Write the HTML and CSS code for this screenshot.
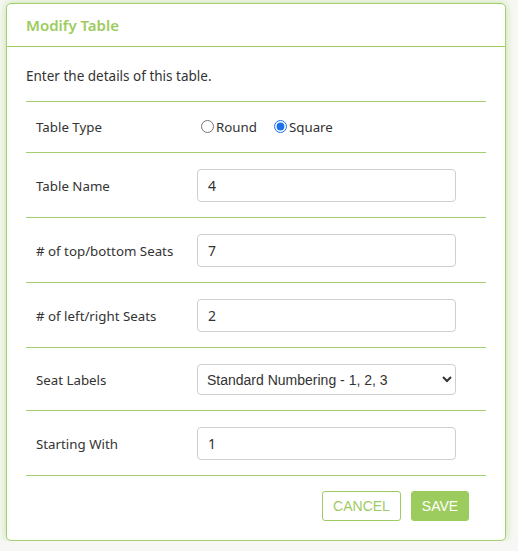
FILE: index.html
```html
<!DOCTYPE html>
<html lang="en">

<head>
  <meta charset="UTF-8" />
  <meta name="viewport" content="width=device-width, initial-scale=1.0" />
  <title>Modify Table</title>
  <link rel="stylesheet" href="styles.css">
</head>

<body>
  <div class="modal">
    <div class="modal-header">
      <h2>Modify Table</h2>
    </div>
    <div class="modal-body">
      <p class="intro">Enter the details of this table.</p>
      <div class="form-row">
        <label>Table Type</label>
        <div class="radios">
          <label class="radio"><input type="radio" name="shape" /> Round</label>
          <label class="radio"><input type="radio" name="shape" checked /> Square</label>
        </div>
      </div>
      <div class="form-row">
        <label>Table Name</label>
        <input type="text" value="4" />
      </div>
      <div class="form-row">
        <label># of top/bottom Seats</label>
        <input type="text" value="7" />
      </div>
      <div class="form-row">
        <label># of left/right Seats</label>
        <input type="text" value="2" />
      </div>
      <div class="form-row">
        <label>Seat Labels</label>
        <select>
          <option>Standard Numbering - 1, 2, 3</option>
          <option>Letters - A, B, C</option>
        </select>
      </div>
      <div class="form-row">
        <label>Starting With</label>
        <input type="text" value="1" />
      </div>
    </div>
    <div class="modal-footer">
      <button class="btn btn-outline">CANCEL</button>
      <button class="btn btn-primary">SAVE</button>
    </div>
  </div>
</body>

</html>
```

FILE: styles.css
```css
* {
  box-sizing: border-box;
}

body {
  margin: 0;
  background: #f7f8f5;
  font-family: "Noto Sans", Lato, sans-serif;
  color: #333;
}

.modal {
  width: 500px;
  height: 538px;
  margin: 3px 0 0 6px;
  background: #fff;
  border: 1px solid #a6d070;
  border-radius: 5px;
  box-shadow: 0 0 8px rgba(150, 205, 90, 0.55);
  display: flex;
  flex-direction: column;
}

.modal-header {
  height: 43px;
  padding: 0 19px;
  border-bottom: 1px solid #9fcb63;
  display: flex;
  align-items: center;
}

.modal-header h2 {
  margin: 0;
  font-size: 15px;
  font-weight: 600;
  color: #9dcc5e;
}

.modal-body {
  padding: 0 19px;
}

.intro {
  margin: 0;
  height: 55px;
  padding-top: 20px;
  font-size: 13.5px;
  border-bottom: 1px solid #a6cd70;
}

.form-row {
  display: grid;
  grid-template-columns: 171px 259px;
  align-items: center;
  padding: 16px 0 15px;
  border-bottom: 1px solid #a6cd70;
  font-size: 13.3px;
}

.form-row > label {
  padding-left: 10px;
}

.form-row:first-of-type {
  padding: 14px 0 15px;
}

.radios {
  display: flex;
  align-items: center;
  gap: 17px;
  padding-left: 4px;
  height: 21px;
}

.radio {
  display: flex;
  align-items: center;
}

.radio input {
  margin: 0 2px 0 0;
  width: 13px;
  height: 13px;
  accent-color: #1a73e8;
}

.form-row input[type="text"],
.form-row select {
  width: 259px;
  height: 33px;
  border: 1px solid #cfcfcf;
  border-radius: 4px;
  padding: 0 10px;
  font-size: 14px;
  color: #333;
  background: #fff;
}

.form-row input[type="text"] {
  font-family: "Noto Sans", Lato, sans-serif;
}

.form-row select {
  height: 31px;
  font-family: "Liberation Sans", Arial, sans-serif;
  padding-left: 5px;
}

.modal-footer {
  display: flex;
  justify-content: flex-end;
  gap: 10px;
  padding: 15px 36px 0 0;
}

.btn {
  height: 30px;
  border-radius: 3px;
  font-family: "Liberation Sans", Arial, sans-serif;
  font-size: 14px;
  cursor: pointer;
}

.btn-outline {
  width: 79px;
  border: 1px solid #9fcb63;
  background: #fff;
  color: #9fcb63;
}

.btn-primary {
  width: 58px;
  border: 1px solid #9dcc5e;
  background: #9dcc5e;
  color: #fff;
}
```
